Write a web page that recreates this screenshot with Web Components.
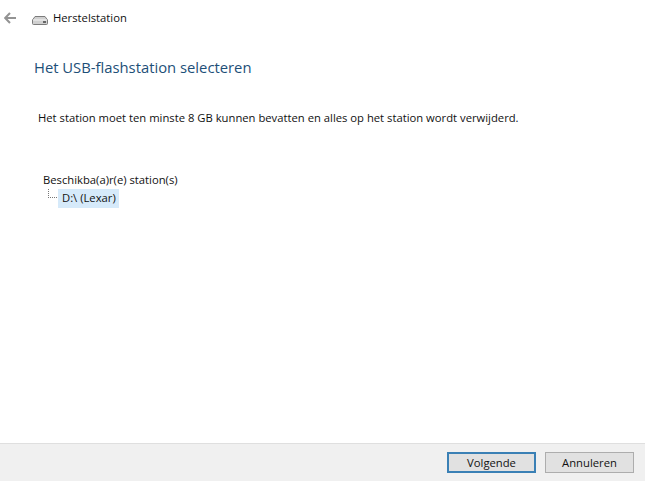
<!DOCTYPE html>
<html>
<head>
<meta charset="utf-8">
<style>
html, body { margin: 0; height: 100%; background: #fff; }
body { font-family: "Open Sans", "Noto Sans", sans-serif; font-size: 11.25px; color: #111; overflow: hidden; }
</style>
</head>
<body>
<wizard-dialog>
    <span slot="title">Herstelstation</span>
    <span slot="heading">Het USB-flashstation selecteren</span>
    <p>Het station moet ten minste 8 GB kunnen bevatten en alles op het station wordt verwijderd.</p>
    <drive-tree label="Beschikba(a)r(e) station(s)" item="D:\ (Lexar)"></drive-tree>
    <wizard-button slot="buttons" primary>Volgende</wizard-button>
    <wizard-button slot="buttons">Annuleren</wizard-button>
</wizard-dialog>

<script>
class WizardDialog extends HTMLElement {
    constructor() {
        super();
        this.attachShadow({ mode: "open" });
        this.shadowRoot.innerHTML = `
        <style>
            :host { display: flex; flex-direction: column; height: 481px; width: 645px; }
            .Top { display: flex; align-items: center; height: 35px; padding-left: 4px; }
            .Back { width: 12px; height: 12px; margin-right: 16px; }
            .Drive { width: 16px; height: 9px; margin: 6px 5px 0 0; }
            .Main { flex: 1; padding: 22px 0 0 34px; }
            .Heading { color: #1d4f78; font-size: 14.8px; line-height: 20px; margin-bottom: 32px; }
            .Bottom { display: flex; justify-content: flex-end; gap: 9px; align-items: center; height: 37px; padding-right: 11px; background: #f0f0f0; border-top: 1px solid #dfdfdf; }
        </style>
        <div class="Top">
            <svg class="Back" viewBox="0 0 12 12">
                <path d="M6 1 L1.2 6 L6 11 M1.5 6 H12" fill="none" stroke="#939393" stroke-width="2"/>
            </svg>
            <svg class="Drive" viewBox="0 0 16 9">
                <path d="M3 .5 H13 L15.5 4 V7.5 Q15.5 8.5 14.5 8.5 H1.5 Q.5 8.5 .5 7.5 V4 Z" fill="#d0d0d0" stroke="#7c7c7c"/>
                <path d="M1 4 H15" stroke="#f4f4f4"/>
                <rect x="11" y="5" width="3" height="2" fill="#666"/>
            </svg>
            <slot name="title"></slot>
        </div>
        <div class="Main">
            <div class="Heading"><slot name="heading"></slot></div>
            <slot></slot>
        </div>
        <div class="Bottom"><slot name="buttons"></slot></div>
        `;
    }
}

class DriveTree extends HTMLElement {
    constructor() {
        super();
        this.attachShadow({ mode: "open" });
    }
    connectedCallback() {
        this.shadowRoot.innerHTML = `
        <style>
            :host { display: block; margin: 44px 0 0 9px; }
            .Label { line-height: 18px; }
            .Row { display: flex; height: 19px; }
            .Line { width: 8px; height: 8px; margin: 0 1px 0 5px; border-left: 1px dotted #777; border-bottom: 1px dotted #777; }
            .Item { background: #d6eafa; padding: 0 3px 0 4px; line-height: 18px; height: 19px; }
        </style>
        <div class="Label">${this.getAttribute("label")}</div>
        <div class="Row"><div class="Line"></div><div class="Item">${this.getAttribute("item")}</div></div>
        `;
    }
}

class WizardButton extends HTMLElement {
    constructor() {
        super();
        this.attachShadow({ mode: "open" });
        this.shadowRoot.innerHTML = `
        <style>
            :host { display: flex; align-items: center; justify-content: center; box-sizing: border-box; width: 89px; height: 21px; background: #e1e1e1; border: 1px solid #adadad; }
            :host([primary]) { border: 2px solid #3a80b5; }
        </style>
        <slot></slot>
        `;
    }
}

customElements.define("wizard-dialog", WizardDialog);
customElements.define("drive-tree", DriveTree);
customElements.define("wizard-button", WizardButton);
</script>
<style>
wizard-dialog p { margin: 0 0 0 4px; line-height: 18px; }
</style>
</body>
</html>
